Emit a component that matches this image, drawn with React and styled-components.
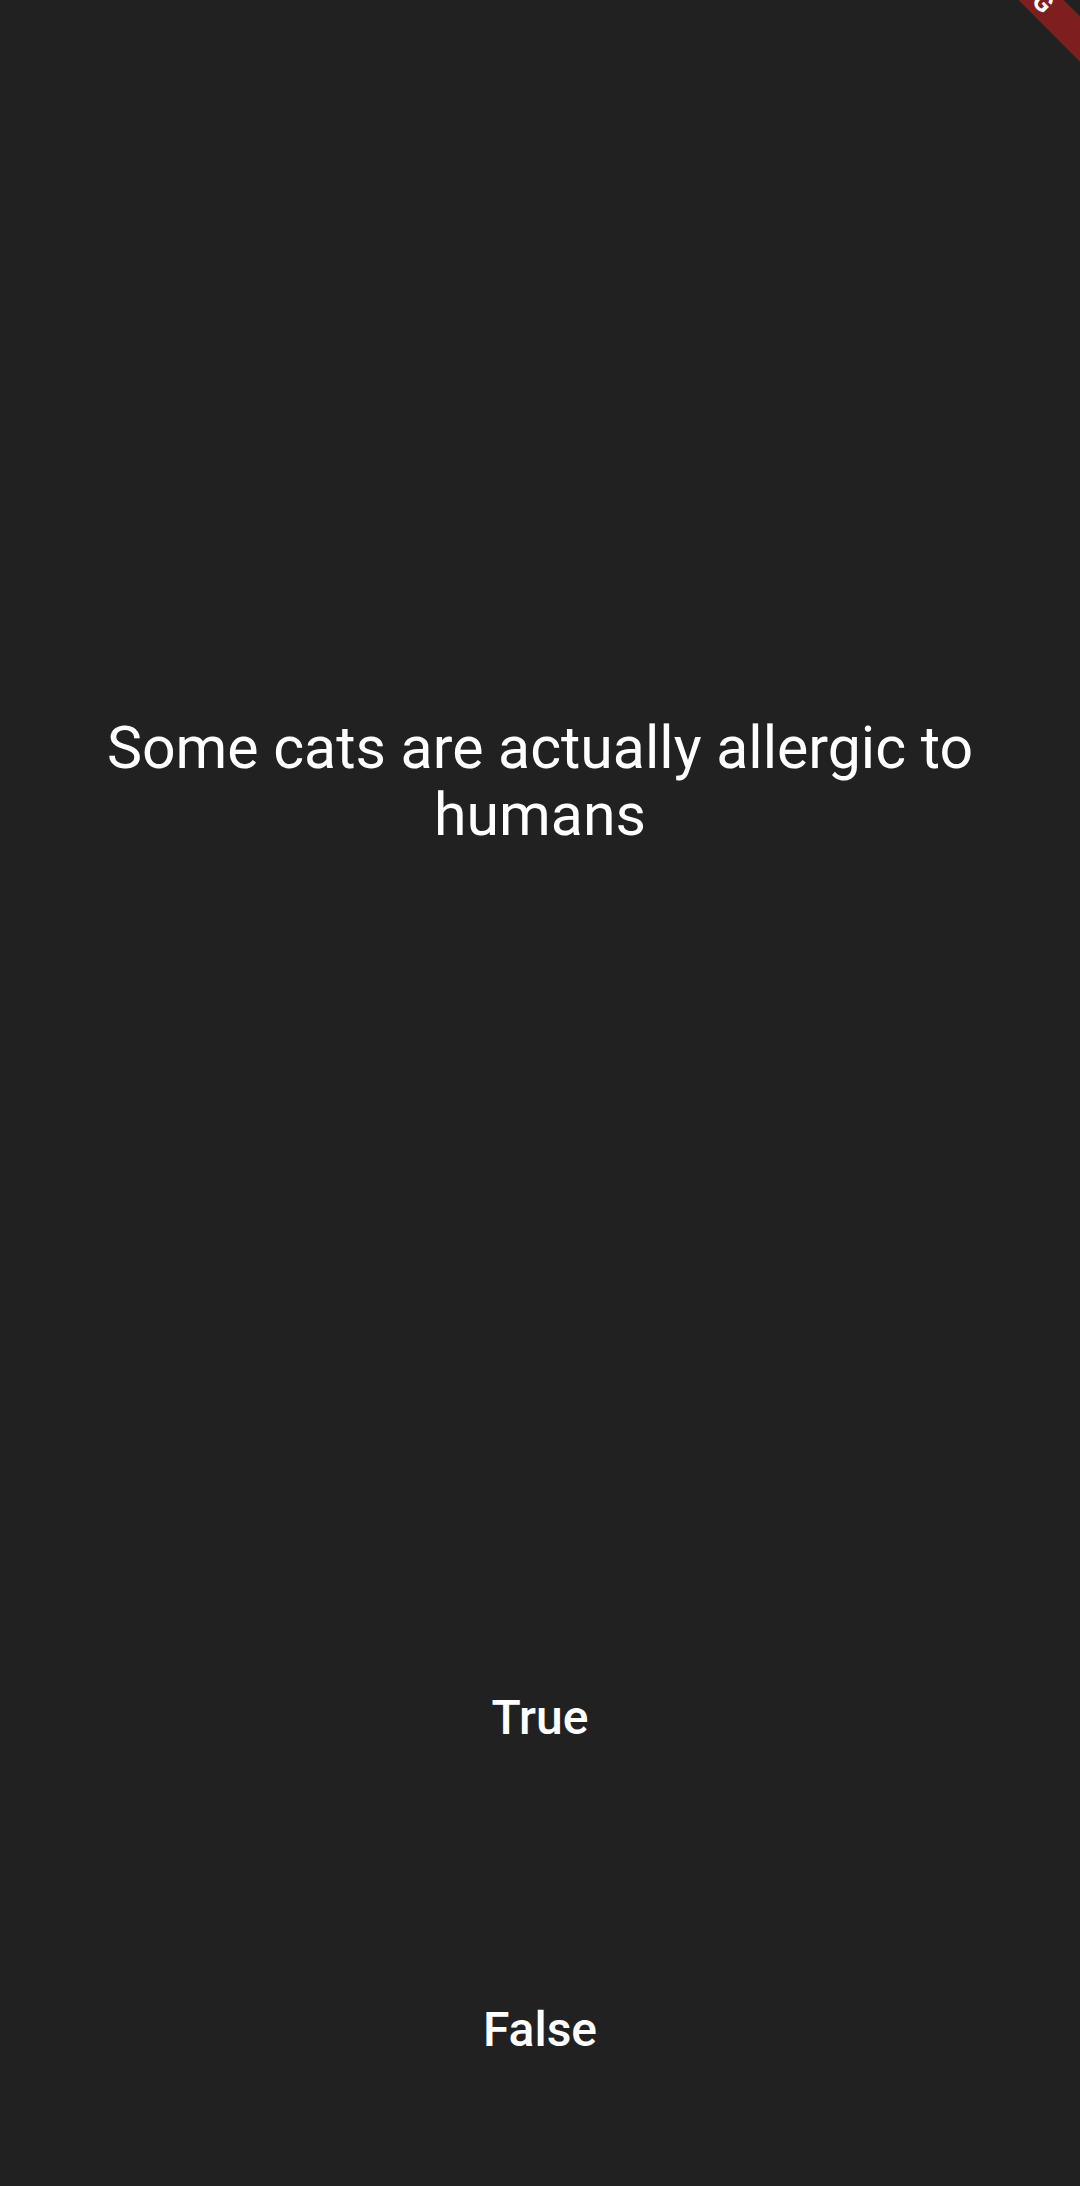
import React from 'react';
import styled, { createGlobalStyle } from 'styled-components';

const GlobalStyle = createGlobalStyle`
  html, body {
    margin: 0;
    padding: 0;
    background: #212121;
  }
  body {
    font-family: Roboto, 'Liberation Sans', sans-serif;
  }
`

const Screen = styled.div`
  position: relative;
  overflow: hidden;
  height: 2186px;
  display: flex;
  flex-direction: column;
  background: #212121;
  color: #ffffff;
`

// flex slot without padding so the 5:1:1 split is exact
const Slot = styled.div`
  flex: ${(p) => p.flex} 1 0px;
  min-height: 0;
  display: flex;
`

const QuestionBox = styled.div`
  flex: 1;
  display: flex;
  align-items: center;
  justify-content: center;
  padding: 27px;
`

const Question = styled.p`
  margin: 0;
  text-align: center;
  font-size: 59px;
  line-height: 67px;
  font-weight: 400;
`

const AnswerBox = styled.div`
  flex: 1;
  display: flex;
  padding: 41px;
`

const AnswerButton = styled.button`
  flex: 1;
  border: none;
  background: transparent;
  color: #ffffff;
  font-family: Roboto, 'Liberation Sans', sans-serif;
  font-size: 48px;
  font-weight: 500;
  cursor: pointer;
`

const Ribbon = styled.div`
  position: absolute;
  left: 841px;
  top: -16px;
  width: 400px;
  height: 32px;
  transform: rotate(45deg);
  background: #7f1e1e;
  display: flex;
  align-items: center;
  justify-content: flex-end;
  padding-right: 187px;
  box-sizing: border-box;
`

const RibbonText = styled.span`
  color: #ffffff;
  font-size: 26px;
  font-weight: 700;
  letter-spacing: 1px;
`

const answers = ['True', 'False'];

const App = () => (
  <Screen>
    <GlobalStyle />
    <Slot flex={5}>
      <QuestionBox>
        <Question>Some cats are actually allergic to humans</Question>
      </QuestionBox>
    </Slot>
    {answers.map((answer) => (
      <Slot flex={1} key={answer}>
        <AnswerBox>
          <AnswerButton>{answer}</AnswerButton>
        </AnswerBox>
      </Slot>
    ))}
    <Ribbon>
      <RibbonText>DEBUG</RibbonText>
    </Ribbon>
  </Screen>
);

export default App;
